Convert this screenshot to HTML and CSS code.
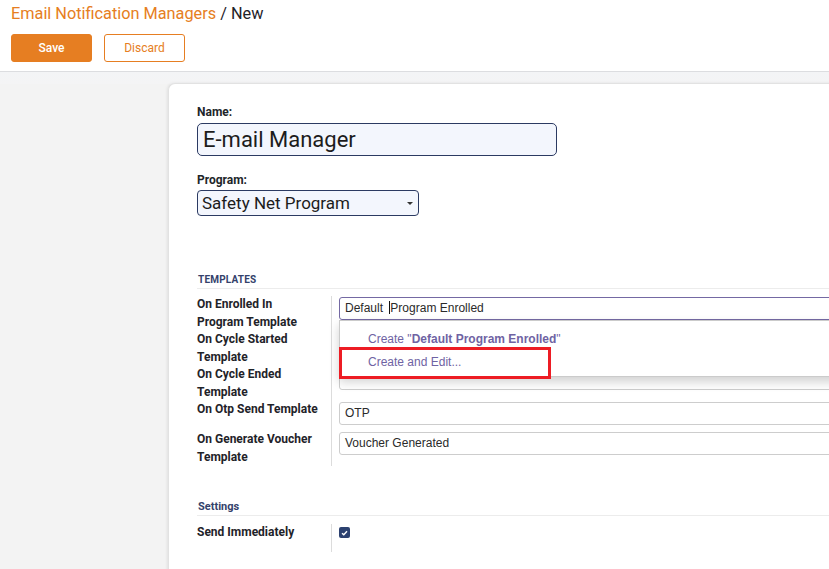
FILE: index.html
```html
<!DOCTYPE html>
<html>
<head>
<meta charset="utf-8">
<link rel="stylesheet" href="styles.css">
</head>
<body>
<header class="cp">
  <div class="crumbs"><span class="crumb-link">Email Notification Managers</span> / New</div>
  <div class="actions">
    <button class="btn btn-save">Save</button>
    <button class="btn btn-discard">Discard</button>
  </div>
</header>
<main class="content">
  <div class="sheet">
    <div class="fld-label">Name:</div>
    <div class="name-input">E-mail Manager</div>
    <div class="fld-label prog-label">Program:</div>
    <div class="select-input"><span>Safety Net Program</span><span class="caret"></span></div>

    <div class="group-title">TEMPLATES</div>
    <div class="grid">
      <div class="lbl">On Enrolled In Program Template</div>
      <div class="fld fld-drop">
        <div class="inp inp-focus">Default <span class="cursor"></span>Program Enrolled</div>
        <div class="dropdown">
          <div class="dd-item">Create "<b>Default Program Enrolled</b>"</div>
          <div class="dd-item">Create and Edit...</div>
        </div>
        <div class="highlight"></div>
      </div>
      <div class="lbl">On Cycle Started Template</div>
      <div class="fld"><div class="inp"></div></div>
      <div class="lbl">On Cycle Ended Template</div>
      <div class="fld"><div class="inp"></div></div>
      <div class="lbl">On Otp Send Template</div>
      <div class="fld"><div class="inp">OTP</div></div>
      <div class="lbl">On Generate Voucher Template</div>
      <div class="fld"><div class="inp">Voucher Generated</div></div>
    </div>

    <div class="group-title settings-title">Settings</div>
    <div class="grid">
      <div class="lbl">Send Immediately</div>
      <div class="fld fld-check">
        <span class="checkbox"><svg width="7" height="6" viewBox="0 0 7 6"><path d="M1 3.2 L2.8 4.8 L6 1.2" fill="none" stroke="#fff" stroke-width="1.4"/></svg></span>
      </div>
    </div>
  </div>
</main>
</body>
</html>
```
FILE: styles.css
```css
html, body {
  margin: 0;
  padding: 0;
  width: 829px;
  height: 569px;
  overflow: hidden;
  background: #f3f3f4;
  font-family: Roboto, "Liberation Sans", sans-serif;
  color: #212529;
}
.cp {
  background: #fff;
  height: 71px;
  border-bottom: 1px solid #dcdde0;
  box-sizing: content-box;
}
.crumbs {
  padding: 4px 0 0 11px;
  font-size: 16.3px;
  line-height: 20px;
  color: #1f2329;
}
.crumb-link { color: #e67e22; }
.actions {
  display: flex;
  gap: 12px;
  padding: 10px 0 0 11px;
}
.btn {
  width: 81px;
  height: 28px;
  border-radius: 3px;
  font-family: Roboto, sans-serif;
  font-size: 12px;
  padding: 0;
  box-sizing: border-box;
}
.btn-save {
  background: #e67e22;
  border: 1px solid #e67e22;
  color: #fff;
  font-weight: 500;
}
.btn-discard {
  background: #fff;
  border: 1px solid #e67e22;
  color: #e67e22;
}
.content {
  padding: 11px 0 0 168px;
  background: linear-gradient(#f3f4f6, #f4f4f5 12px, #f3f3f3 12px);
  height: 486px;
}
.sheet {
  width: 720px;
  height: 520px;
  background: #fff;
  border-radius: 7px 0 0 0;
  box-shadow: -1px 0 3px rgba(0,0,0,0.08);
  border-left: 1px solid #e2e2e2;
  border-top: 1px solid #e2e2e2;
  padding: 21px 0 0 28px;
  box-sizing: border-box;
  position: relative;
}
.fld-label {
  font-size: 12px;
  font-weight: 700;
  line-height: 15px;
}
.name-input {
  margin-top: 3px;
  width: 360px;
  height: 33px;
  box-sizing: border-box;
  border: 1px solid #2b3a62;
  border-radius: 5px;
  background: #f3f6fd;
  font-size: 22px;
  line-height: 31px;
  padding-left: 5px;
  color: #1c1c1c;
}
.prog-label { margin-top: 17px; }
.select-input {
  margin-top: 2px;
  width: 222px;
  height: 26px;
  box-sizing: border-box;
  border: 1px solid #2b3a62;
  border-radius: 4px;
  background: #f3f6fd;
  font-size: 17px;
  line-height: 24px;
  padding-left: 4px;
  display: flex;
  justify-content: space-between;
  align-items: center;
  color: #1c1c1c;
}
.caret {
  width: 0;
  height: 0;
  border-left: 3px solid transparent;
  border-right: 3px solid transparent;
  border-top: 3px solid #333;
  margin-right: 5px;
}
.group-title {
  margin-top: 58px;
  font-size: 10px;
  font-weight: 700;
  color: #34426b;
  line-height: 12px;
  padding-bottom: 2px;
  border-bottom: 1px solid #ececec;
  margin-bottom: 7px;
  letter-spacing: 0.2px;
  padding-left: 1px;
}
.settings-title {
  margin-top: 35px;
  font-size: 11px;
  letter-spacing: 0;
  padding-bottom: 2px;
  margin-bottom: 8px;
}
.grid {
  display: grid;
  grid-template-columns: 134px 1fr;
}
.lbl {
  font-size: 12px;
  font-weight: 700;
  line-height: 17.5px;
  padding-right: 12px;
  color: #1f2329;
}
.fld {
  border-left: 1px solid #dcdcdc;
  padding: 1px 0 6px 7px;
  position: relative;
}
.inp {
  height: 23px;
  box-sizing: border-box;
  border: 1px solid #cdcdcd;
  border-radius: 3px;
  font-family: "Liberation Sans", Arial, sans-serif;
  font-size: 12px;
  line-height: 21px;
  padding-left: 5px;
  color: #2a2a2a;
}
.inp-focus {
  border-color: #7469a3;
  border-radius: 3px 0 0 3px;
  height: 23px;
}
.cursor {
  display: inline-block;
  width: 1px;
  height: 13px;
  background: #111;
  vertical-align: -2px;
  margin-left: 3px;
}
.dropdown {
  position: absolute;
  left: 7px;
  top: 24px;
  width: 600px;
  height: 57px;
  box-sizing: border-box;
  background: #fff;
  border: 1px solid #cbcbcb;
  box-shadow: 0 5px 10px rgba(0,0,0,0.18);
  z-index: 3;
  padding-top: 7px;
}
.dd-item {
  font-family: "Liberation Sans", Arial, sans-serif;
  font-size: 12px;
  line-height: 23px;
  color: #6f63a3;
  padding-left: 28px;
}
.dd-item b { font-weight: 700; }
.highlight {
  position: absolute;
  left: 7px;
  top: 51px;
  width: 212px;
  height: 32px;
  box-sizing: border-box;
  border: 3px solid #ed1c24;
  z-index: 4;
}
.fld-check {
  padding: 3px 0 14px 7px;
}
.checkbox {
  display: flex;
  align-items: center;
  justify-content: center;
  width: 11px;
  height: 11px;
  border-radius: 2px;
  background: #2c4170;
}
```
